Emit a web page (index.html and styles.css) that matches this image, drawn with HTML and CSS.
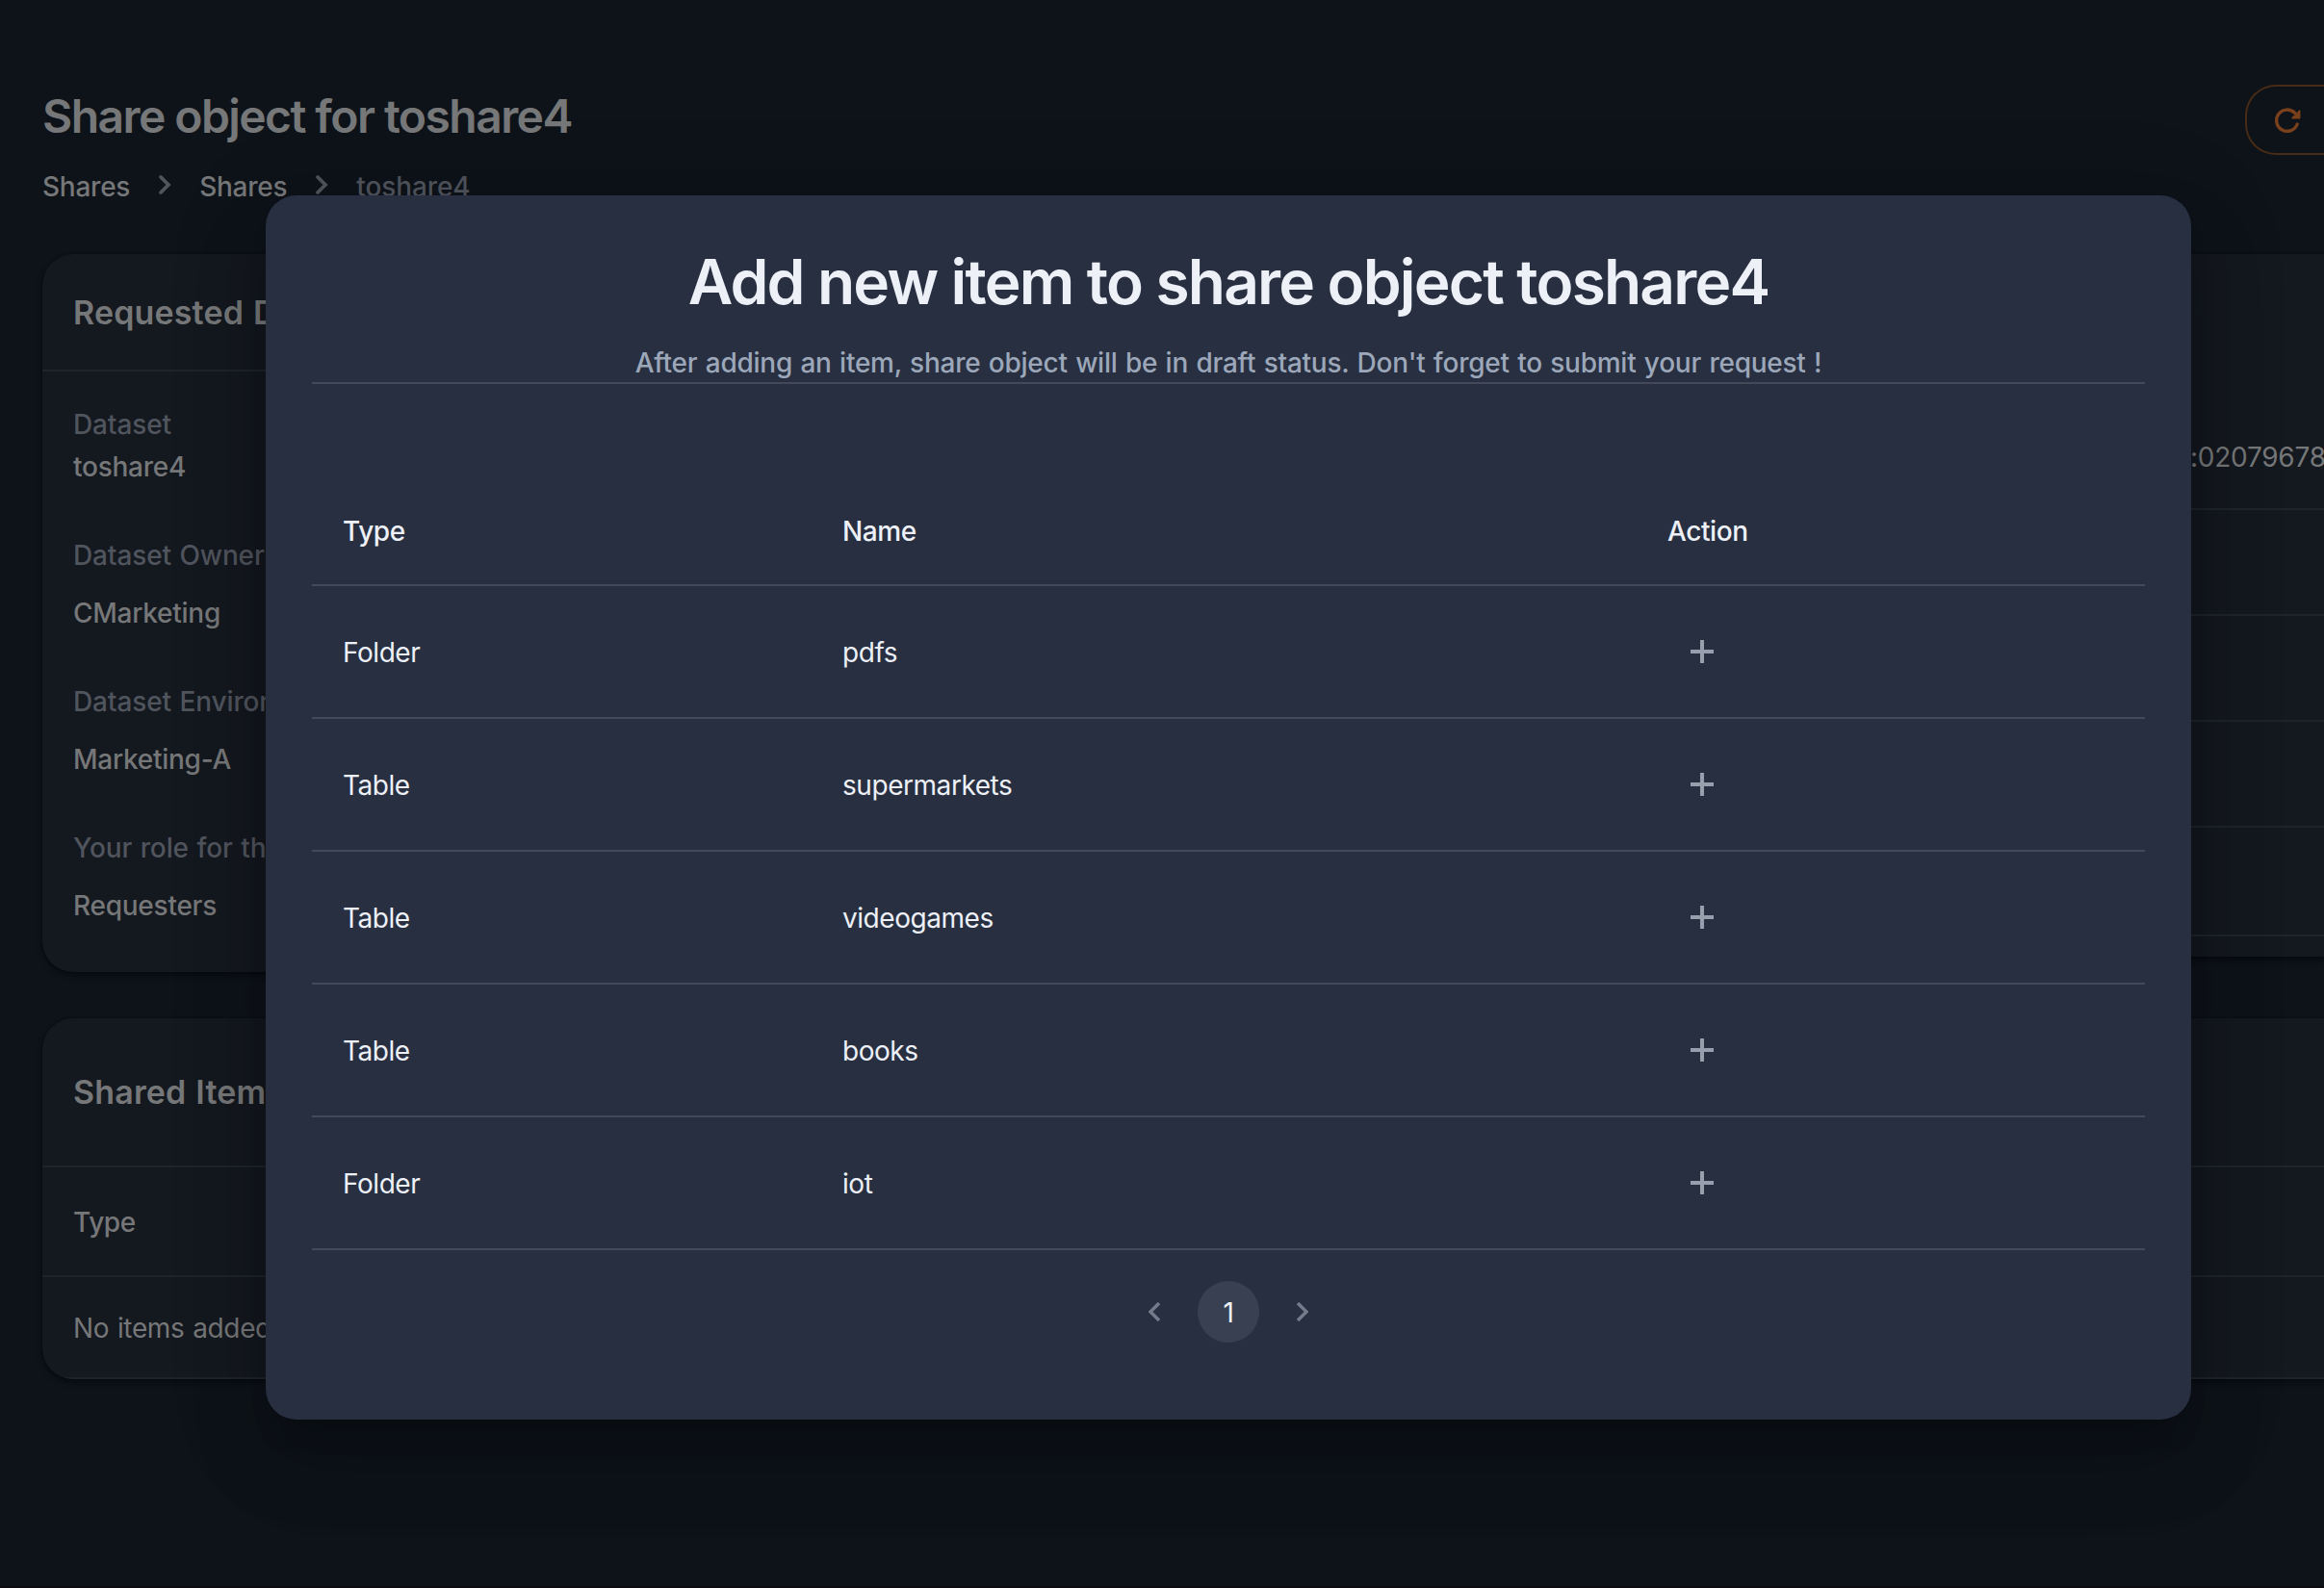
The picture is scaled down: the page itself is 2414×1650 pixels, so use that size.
FILE: index.html
```html
<!DOCTYPE html>
<html lang="en">
<head>
<meta charset="utf-8">
<title>Share object for toshare4</title>
<link rel="stylesheet" href="styles.css">
</head>
<body>
<div class="app">
  <header class="page-header">
    <div class="heading">
      <h1 class="page-title">Share object for toshare4</h1>
      <nav class="breadcrumbs">
        <a class="crumb">Shares</a>
        <svg class="crumb-sep" viewBox="0 0 14 22"><path d="M3 3l8 8-8 8"/></svg>
        <a class="crumb">Shares</a>
        <svg class="crumb-sep" viewBox="0 0 14 22"><path d="M3 3l8 8-8 8"/></svg>
        <span class="crumb current">toshare4</span>
      </nav>
    </div>
    <button class="refresh" aria-label="Refresh">
      <svg class="refresh-icon" viewBox="0 0 32 32"><path class="ring" d="M24.200 20A11.100 11.100 0 1 1 21.600 8.300"/><path class="head" d="M26.700 6v7.700h-7.700z"/></svg>
    </button>
  </header>

  <section class="details">
    <article class="card requested">
      <h2 class="card-title">Requested Dataset</h2>
      <dl class="facts">
        <dt>Dataset</dt><dd class="tight">toshare4</dd>
        <dt>Dataset Owners</dt><dd>CMarketing</dd>
        <dt>Dataset Environment</dt><dd>Marketing-A</dd>
        <dt>Your role for this request</dt><dd>Requesters</dd>
      </dl>
    </article>
    <article class="card requester">
      <div class="info first">:02079678</div>
      <div class="info"></div>
      <div class="info"></div>
      <div class="info"></div>
      <div class="info last"></div>
    </article>
  </section>

  <section class="card shared">
    <h2 class="card-title tall">Shared Items</h2>
    <div class="shared-head">Type</div>
    <div class="shared-row">No items added.</div>
  </section>
</div>

<div class="backdrop">
  <div class="dialog">
    <h2 class="dialog-title">Add new item to share object toshare4</h2>
    <p class="dialog-note">After adding an item, share object will be in draft status. Don't forget to submit your request !</p>
    <div class="items">
      <div class="row head-row"><span>Type</span><span>Name</span><span>Action</span></div>
      <div class="row"><span>Folder</span><span>pdfs</span><svg class="plus" viewBox="0 0 24 24"><path d="M12 0v24M0 12h24"/></svg></div>
      <div class="row"><span>Table</span><span>supermarkets</span><svg class="plus" viewBox="0 0 24 24"><path d="M12 0v24M0 12h24"/></svg></div>
      <div class="row"><span>Table</span><span>videogames</span><svg class="plus" viewBox="0 0 24 24"><path d="M12 0v24M0 12h24"/></svg></div>
      <div class="row"><span>Table</span><span>books</span><svg class="plus" viewBox="0 0 24 24"><path d="M12 0v24M0 12h24"/></svg></div>
      <div class="row"><span>Folder</span><span>iot</span><svg class="plus" viewBox="0 0 24 24"><path d="M12 0v24M0 12h24"/></svg></div>
    </div>
    <div class="pager">
      <svg class="arrow" viewBox="0 0 12 20"><path d="M11 1 2 10l9 9"/></svg>
      <span class="page">1</span>
      <svg class="arrow" viewBox="0 0 12 20"><path d="M1 1l9 9-9 9"/></svg>
    </div>
  </div>
</div>
</body>
</html>
```
FILE: styles.css
```css
* { box-sizing: border-box; }
html, body { margin: 0; height: 100%; overflow: hidden; }
body {
  background: #0e131a;
  color: #767778;
  font-family: Inter, "Liberation Sans", sans-serif;
  font-size: 28px;
  line-height: 44px;
  letter-spacing: -0.25px;
  word-spacing: 1.2px;
}
h1, h2, p, dl, dd { margin: 0; font-weight: 600; }

.app { padding: 88px 0 0 44px; height: 1650px; border-bottom: 2px solid #0d0d11; }
.page-header { display: flex; justify-content: space-between; height: 176px; }
.page-title { font-size: 48px; line-height: 66px; letter-spacing: -1.57px; word-spacing: 0; }
.breadcrumbs { display: flex; align-items: center; margin-top: 18px; font-weight: 500; }
.crumb-sep { width: 14px; height: 22px; margin: 0 29.5px 4px 28.5px; fill: none; stroke: #50545d; stroke-width: 3.800; stroke-linecap: round; }
.current { color: #50545d; letter-spacing: -0.1px; }
.refresh {
  width: 82px; height: 73px; padding: 0 0 0 28px; display: flex; align-items: center;
  background: none; border: 2px solid #472b15; border-right: 0; border-radius: 32px 0 0 32px;
}
.refresh-icon { width: 32px; height: 32px; }
.ring { fill: none; stroke: #7a401c; stroke-width: 3.400; stroke-linecap: round; }
.head { fill: #7a401c; stroke: #7a401c; stroke-width: 1.500; stroke-linejoin: round; }

.card {
  background: #14181f; border-radius: 32px; overflow: hidden;
  box-shadow: 0 0 2px rgba(0,0,0,.6), 0 4px 6px rgba(0,0,0,.4);
}
.details { display: flex; gap: 48px; align-items: flex-start; height: 794px; }
.requested { width: 1400px; height: 746px; }
.requester { flex: 1; height: 730px; padding-top: 154px; border-radius: 32px 0 0 32px; }
.card-title { height: 122px; padding: 39px 32px 0; font-size: 34px; letter-spacing: 0.15px; border-bottom: 2px solid #1f242b; }
.card-title.tall { height: 155px; padding-top: 55px; }
.facts { padding: 33px 32px; }
dt { color: #50545d; font-weight: 500; letter-spacing: -0.12px; }
dd { font-weight: 500; padding: 16px 0 48px; }
dd.tight { padding-top: 0; }
.info { height: 110px; border-bottom: 2px solid #1f242b; }
.info.first { height: 112px; padding: 35px 0 0 783px; }
.info.last { height: 113px; }
.shared { height: 375px; border-radius: 32px 0 0 32px; }
.shared-head { height: 114px; padding: 35px 32px 0; font-weight: 500; letter-spacing: -0.4px; border-bottom: 2px solid #1f242b; }
.shared-row { height: 106px; padding: 31px 32px 0; letter-spacing: -0.35px; border-bottom: 2px solid #1f242b; }

/* modal layer above the page */
.backdrop { position: absolute; inset: 0; padding: 203px 138px 0 276px; }
.dialog {
  width: 2000px; height: 1272px; padding: 48px; border-radius: 32px;
  background: #272f41; color: #edf0f7;
  box-shadow: 0 22px 30px -14px rgba(0,0,0,.2), 0 48px 76px 6px rgba(0,0,0,.14), 0 18px 92px 16px rgba(0,0,0,.12);
}
.dialog-title { font-size: 64px; line-height: 84px; letter-spacing: -1.82px; word-spacing: 0; text-align: center; }
.dialog-note { margin-top: 20px; height: 44px; font-weight: 500; text-align: center; color: #9ca7b9; border-bottom: 2px solid #424959; }
.items { padding-top: 98px; }
.row { display: grid; grid-template-columns: 519px 857px 1fr; height: 138px; padding-left: 32px; align-items: center; letter-spacing: -0.45px; border-bottom: 2px solid #424959; }
.row span { padding-top: 2px; }
.row.head-row { height: 112px; font-weight: 500; letter-spacing: -0.4px; }
.row.head-row span { padding-top: 0; }
.plus { width: 24px; height: 24px; margin-left: 24px; fill: none; stroke: #979eac; stroke-width: 4; }
.pager { display: flex; align-items: center; justify-content: center; margin-top: 32px; gap: 39px; }
.arrow { width: 12px; height: 20px; fill: none; stroke: #747c8a; stroke-width: 3.400; }
.page { width: 64px; height: 64px; padding-top: 2px; border-radius: 50%; background: #384051; display: flex; align-items: center; justify-content: center; }
```
